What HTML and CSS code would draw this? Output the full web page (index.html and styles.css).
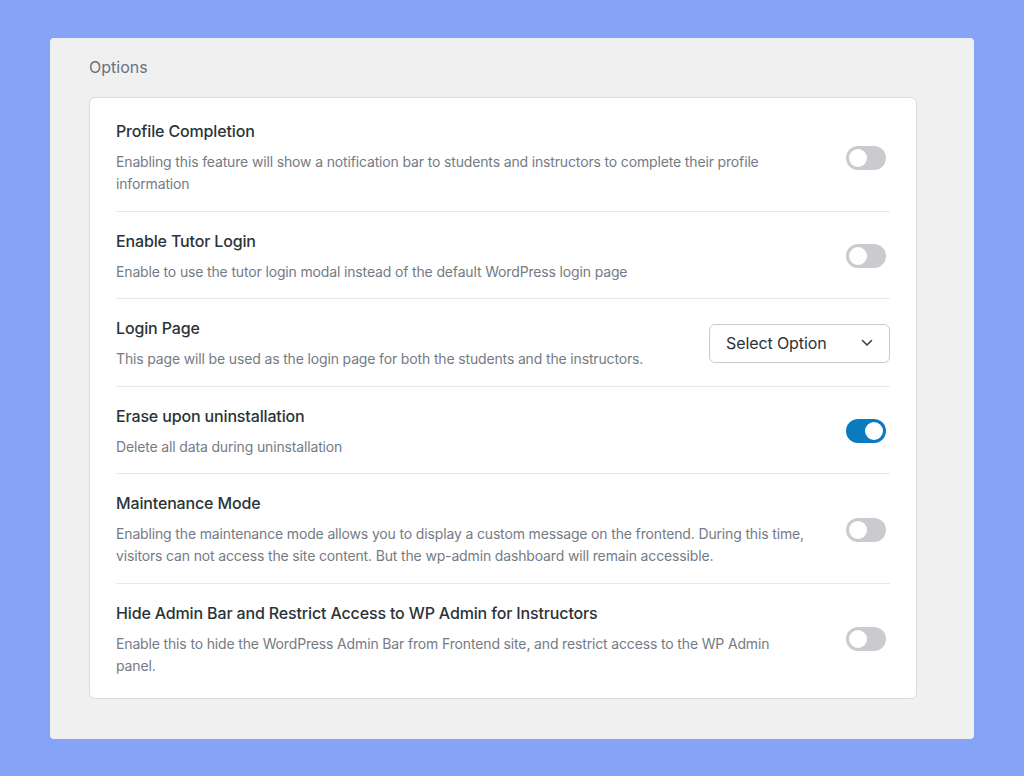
FILE: index.html
```html
<!DOCTYPE html>
<html>
<head>
<meta charset="utf-8">
<link rel="stylesheet" href="styles.css">
</head>
<body>
<div class="panel">
  <div class="panel-title">Options</div>
  <div class="card">
    <div class="row">
      <div class="text">
        <div class="title">Profile Completion</div>
        <div class="desc">Enabling this feature will show a notification bar to students and instructors to complete their profile information</div>
      </div>
      <span class="toggle"><span class="knob"></span></span>
    </div>
    <div class="row">
      <div class="text">
        <div class="title">Enable Tutor Login</div>
        <div class="desc">Enable to use the tutor login modal instead of the default WordPress login page</div>
      </div>
      <span class="toggle"><span class="knob"></span></span>
    </div>
    <div class="row">
      <div class="text">
        <div class="title">Login Page</div>
        <div class="desc">This page will be used as the login page for both the students and the instructors.</div>
      </div>
      <div class="select">
        <span>Select Option</span>
        <svg width="12" height="8" viewBox="0 0 12 8"><path d="M1.5 1.5 L6 6 L10.5 1.5" fill="none" stroke="#3c434a" stroke-width="1.6" stroke-linecap="round" stroke-linejoin="round"/></svg>
      </div>
    </div>
    <div class="row">
      <div class="text">
        <div class="title">Erase upon uninstallation</div>
        <div class="desc">Delete all data during uninstallation</div>
      </div>
      <span class="toggle on"><span class="knob"></span></span>
    </div>
    <div class="row">
      <div class="text">
        <div class="title">Maintenance Mode</div>
        <div class="desc">Enabling the maintenance mode allows you to display a custom message on the frontend. During this time, visitors can not access the site content. But the wp-admin dashboard will remain accessible.</div>
      </div>
      <span class="toggle"><span class="knob"></span></span>
    </div>
    <div class="row">
      <div class="text">
        <div class="title">Hide Admin Bar and Restrict Access to WP Admin for Instructors</div>
        <div class="desc">Enable this to hide the WordPress Admin Bar from Frontend site, and restrict access to the WP Admin panel.</div>
      </div>
      <span class="toggle"><span class="knob"></span></span>
    </div>
  </div>
</div>
</body>
</html>
```

FILE: styles.css
```css
html, body {
  margin: 0;
  padding: 0;
}
body {
  background: #87a3f8;
  font-family: Inter, "Noto Sans", sans-serif;
  height: 776px;
  overflow: hidden;
}
.panel {
  margin: 38px 50px 0 50px;
  height: 701px;
  box-sizing: border-box;
  background: #f0f0f1;
  border-radius: 4px;
  padding: 19px 57px 0 39px;
}
.panel-title {
  font-size: 16px;
  line-height: 20px;
  color: #6b7079;
  margin-bottom: 20px;
}
.card {
  background: #fff;
  border: 1px solid #dcdcde;
  border-radius: 6px;
  padding: 4px 26px 6px 26px;
}
.row {
  display: flex;
  align-items: center;
  justify-content: space-between;
  padding: 19px 0 15.5px 0;
  border-bottom: 1px solid #e8e8ea;
}
.row:last-child {
  border-bottom: none;
}
.text {
  max-width: 690px;
}
.title {
  font-size: 16px;
  line-height: 20px;
  font-weight: 500;
  letter-spacing: -0.15px;
  color: #2c3338;
  margin-bottom: 10px;
}
.desc {
  font-size: 14px;
  line-height: 22px;
  letter-spacing: -0.15px;
  color: #757b84;
}
.toggle {
  flex: none;
  width: 40px;
  height: 24px;
  border-radius: 12px;
  background: #c9cbcf;
  margin: 0 4px 1px 0;
  display: flex;
  align-items: center;
  padding: 0 3px;
  box-sizing: border-box;
}
.toggle .knob {
  width: 18px;
  height: 18px;
  border-radius: 50%;
  background: #fff;
}
.toggle.on {
  background: #0b7bbf;
  justify-content: flex-end;
}
.select {
  flex: none;
  width: 181px;
  height: 39px;
  box-sizing: border-box;
  border: 1px solid #c9cbcf;
  border-radius: 6px;
  display: flex;
  align-items: center;
  justify-content: space-between;
  padding: 0 16px 0 16px;
  margin-bottom: 2px;
  font-size: 16px;
  letter-spacing: -0.1px;
  color: #2c3338;
}
```
